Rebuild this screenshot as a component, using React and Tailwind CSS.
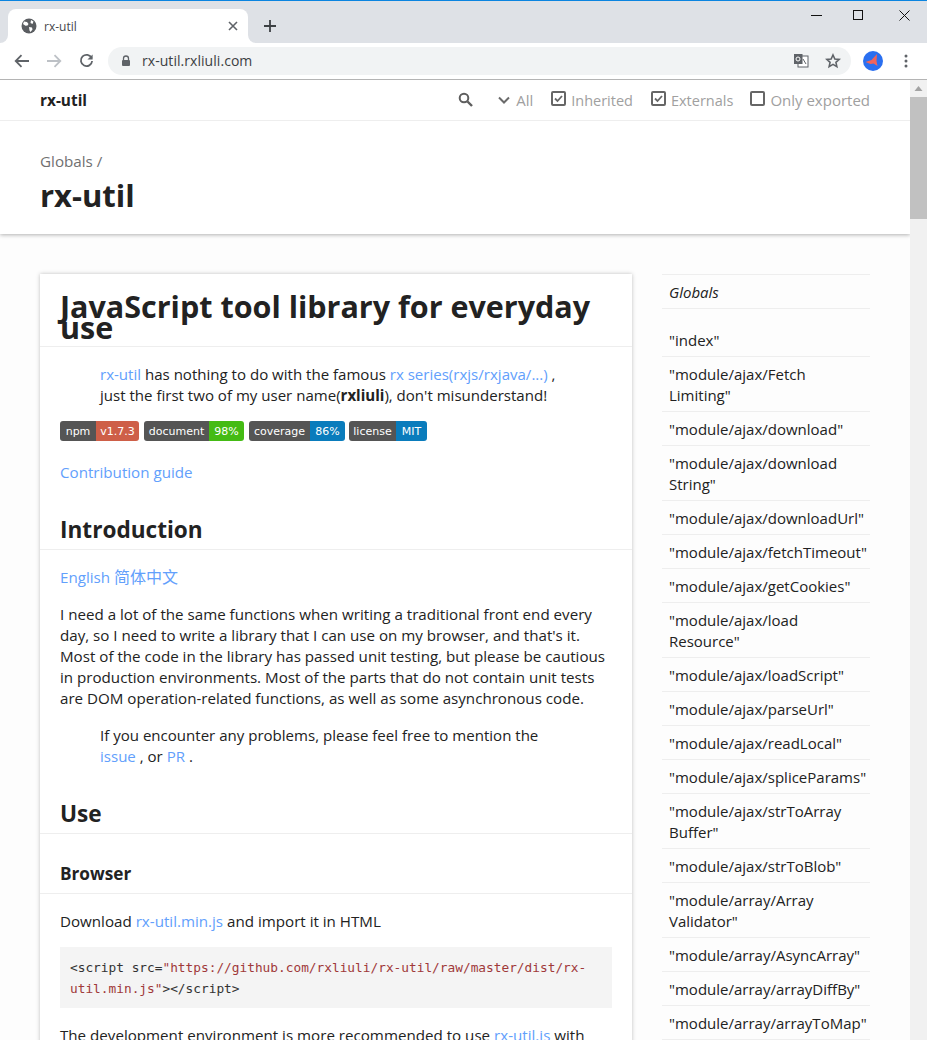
import React from 'react';

const sideItems = [
  ['"index"'],
  ['"module/ajax/Fetch', 'Limiting"'],
  ['"module/ajax/download"'],
  ['"module/ajax/download', 'String"'],
  ['"module/ajax/downloadUrl"'],
  ['"module/ajax/fetchTimeout"'],
  ['"module/ajax/getCookies"'],
  ['"module/ajax/load', 'Resource"'],
  ['"module/ajax/loadScript"'],
  ['"module/ajax/parseUrl"'],
  ['"module/ajax/readLocal"'],
  ['"module/ajax/spliceParams"'],
  ['"module/ajax/strToArray', 'Buffer"'],
  ['"module/ajax/strToBlob"'],
  ['"module/array/Array', 'Validator"'],
  ['"module/array/AsyncArray"'],
  ['"module/array/arrayDiffBy"'],
  ['"module/array/arrayToMap"'],
];

const badges = [
  { label: 'npm', value: 'v1.7.3', lw: 'w-[36px]', vw: 'w-[43px]', bg: 'bg-[#ce5f48]', extra: '' },
  { label: 'document', value: '98%', lw: 'w-[65px]', vw: 'w-[35px]', bg: 'bg-[#44bb14]', extra: '' },
  { label: 'coverage', value: '86%', lw: 'w-[61px]', vw: 'w-[35px]', bg: 'bg-[#0a7cbc]', extra: 'mr-[-1px]' },
  { label: 'license', value: 'MIT', lw: 'w-[47px]', vw: 'w-[31px]', bg: 'bg-[#0a7cbc]', extra: '' },
];

function Check({ checked }) {
  return (
    <svg width="15" height="15" viewBox="0 0 15 15" className="shrink-0 mb-[3px]">
      <rect x="1" y="1" width="13" height="13" rx="1" fill="none" stroke="#666666" strokeWidth="2" />
      {checked && <path d="M4 7.500l2.500 2.500 4.500-5" fill="none" stroke="#666666" strokeWidth="1.800" />}
    </svg>
  );
}

function Link({ children }) {
  return <a className="text-[#62a0fc]">{children}</a>;
}

function ChromeBar() {
  return (
    <div className="h-[80px] shrink-0 flex flex-col bg-[#dee1e6]">
      <div className="h-[1px] bg-[#0a84e0]" />
      <div className="h-[42px] flex relative">
        <div className="relative mt-[8px] ml-[8px] w-[240px] h-[34px] bg-white rounded-t-[8px] flex items-center pl-[13px] pr-[10px]">
          <div className="absolute left-[-8px] bottom-0 w-[8px] h-[8px] bg-white">
            <div className="w-full h-full bg-[#dee1e6] rounded-br-[8px]" />
          </div>
          <div className="absolute right-[-8px] bottom-0 w-[8px] h-[8px] bg-white">
            <div className="w-full h-full bg-[#dee1e6] rounded-bl-[8px]" />
          </div>
          <svg width="16" height="16" viewBox="0 0 16 16">
            <circle cx="8" cy="8" r="7.500" fill="#5a5d61" />
            <path d="M3 3.500l3 .5 1.500 2-1 1.500-2 .2L2 6zM10 2l2.500 1.500-1 2.500-2-1zM8 9l3 .5.5 2-2 2.500-1-1.500z" fill="#fff" />
          </svg>
          <span className="ml-[7px] text-[12px] text-[#45484c] font-['Open_Sans',sans-serif]">rx-util</span>
          <svg width="10" height="10" viewBox="0 0 10 10" className="ml-auto">
            <path d="M1 1l8 8M9 1l-8 8" stroke="#5f6368" strokeWidth="1.600" />
          </svg>
        </div>
        <svg width="12" height="12" viewBox="0 0 12 12" className="ml-[16px] mt-[19px]">
          <path d="M6 0v12M0 6h12" stroke="#3c4043" strokeWidth="1.800" />
        </svg>
        <div className="absolute right-0 top-0 flex">
          <svg width="11" height="11" viewBox="0 0 11 11" className="absolute left-[-116px] top-[9px]">
            <path d="M0 5.500h11" stroke="#111" strokeWidth="1" />
          </svg>
          <svg width="11" height="11" viewBox="0 0 11 11" className="absolute left-[-74px] top-[9px]">
            <rect x=".5" y=".5" width="9" height="9" fill="none" stroke="#111" />
          </svg>
          <svg width="11" height="11" viewBox="0 0 11 11" className="absolute left-[-28px] top-[9px]">
            <path d="M.5.5l10 10M10.500.5l-10 10" stroke="#111" strokeWidth="1" />
          </svg>
        </div>
      </div>
      <div className="h-[36px] bg-white flex items-center pl-[14px] pr-[14px]">
        <svg width="16" height="14" viewBox="0 0 16 14">
          <path d="M15 7H2M7.500 1.200L1.700 7l5.800 5.800" fill="none" stroke="#5f6368" strokeWidth="1.800" />
        </svg>
        <svg width="16" height="14" viewBox="0 0 16 14" className="ml-[16px]">
          <path d="M1 7h13M8.500 1.200L14.300 7l-5.800 5.800" fill="none" stroke="#bdc1c6" strokeWidth="1.800" />
        </svg>
        <svg width="15" height="16" viewBox="0 0 16 16" className="ml-[17px]">
          <path d="M13.500 5A6 6 0 1 0 14 8" fill="none" stroke="#5f6368" strokeWidth="1.900" />
          <path d="M14.500 1v5.500H9z" fill="#5f6368" />
        </svg>
        <div className="ml-[14px] w-[743px] h-[28px] bg-[#f1f3f4] rounded-full flex items-center pl-[13px] pr-[10px]">
          <svg width="10" height="12" viewBox="0 0 10 12">
            <path d="M2.500 5V3.500a2.500 2.500 0 0 1 5 0V5" fill="none" stroke="#5f6368" strokeWidth="1.300" />
            <rect x="1" y="5" width="8" height="6" rx="1" fill="#5f6368" />
          </svg>
          <span className="ml-[11px] mb-[1px] text-[14px] text-[#3c4043] font-['Open_Sans',sans-serif] tracking-[0.05px]">rx-util.rxliuli.com</span>
          <svg width="16" height="16" viewBox="0 0 16 16" className="ml-auto">
            <rect x="5" y="3" width="10" height="11" fill="#fff" stroke="#5f6368" />
            <path d="M10 6l3 5" stroke="#5f6368" />
            <rect x="1" y="1" width="8.500" height="10" fill="#5f6368" />
            <circle cx="5" cy="6" r="2" fill="none" stroke="#fff" />
          </svg>
          <svg width="16" height="16" viewBox="0 0 24 24" className="ml-[16px]">
            <path d="M12 3l2.800 6 6.400.7-4.800 4.300 1.400 6.400L12 17.100l-5.800 3.300 1.400-6.400L2.800 9.700 9.200 9z" fill="none" stroke="#5f6368" strokeWidth="2.400" />
          </svg>
        </div>
        <svg width="20" height="20" viewBox="0 0 20 20" className="ml-[12px]">
          <circle cx="10" cy="10" r="10" fill="#2a6ff0" />
          <path d="M2.500 11l6-2 5.500-6-.5 7 1 5-4-2.500-3 .5z" fill="#f2645a" />
        </svg>
        <svg width="4" height="14" viewBox="0 0 4 14" className="ml-[21px]">
          <circle cx="2" cy="2" r="1.500" fill="#5f6368" />
          <circle cx="2" cy="7" r="1.500" fill="#5f6368" />
          <circle cx="2" cy="12" r="1.500" fill="#5f6368" />
        </svg>
      </div>
      <div className="h-[1px] bg-[#b4b4b4]" />
    </div>
  );
}

function Toolbar() {
  return (
    <div className="h-[41px] shrink-0 border-b border-[#eeeeee] pl-[40px] pr-[40px] flex items-center">
      <span className="font-bold text-[#222222] text-[15.4px]">rx-util</span>
      <svg width="15" height="15" viewBox="0 0 15 15" className="ml-auto mb-[2px]">
        <circle cx="6" cy="6" r="4.300" fill="none" stroke="#5e5e5e" strokeWidth="2" />
        <path d="M9.500 9.500l4.500 4.500" stroke="#5e5e5e" strokeWidth="2.400" />
      </svg>
      <svg width="12" height="8" viewBox="0 0 12 8" className="ml-[25px]">
        <path d="M1 1.500l5 5 5-5" fill="none" stroke="#6a6a6a" strokeWidth="2" />
      </svg>
      <span className="ml-[6px] text-[#a0a0a0]">All</span>
      <div className="ml-[18px] flex items-center gap-[5px]">
        <Check checked />
        <span className="text-[#a0a0a0] text-[14.5px]">Inherited</span>
      </div>
      <div className="ml-[18px] flex items-center gap-[5px]">
        <Check checked />
        <span className="text-[#a0a0a0] text-[14.5px]">Externals</span>
      </div>
      <div className="ml-[17px] flex items-center gap-[5px]">
        <Check />
        <span className="text-[#a0a0a0]">Only exported</span>
      </div>
    </div>
  );
}

function Badge({ label, value, lw, vw, bg, extra }) {
  return (
    <span className={`flex h-[20px] rounded-[3px] overflow-hidden text-white text-[11px] leading-[21px] text-center font-['DejaVu_Sans',sans-serif] ${extra}`}>
      <span className={`${lw} bg-[#555555]`}>{label}</span>
      <span className={`${vw} ${bg}`}>{value}</span>
    </span>
  );
}

function Card() {
  return (
    <div className="w-[592px] shrink-0 h-[900px] bg-white shadow-[0_0_4px_rgba(0,0,0,0.25)] text-[#222222] text-[15.15px]">
      <h1 className="px-[20px] pt-[22px] pb-[8px] text-[30.5px] font-bold leading-[21px] border-b border-[#eeeeee] whitespace-nowrap">
        JavaScript tool library for everyday
        <br />
        use
      </h1>
      <div className="px-[20px] pt-[17px]">
        <div className="pl-[40px] text-[15.05px]">
          <Link>rx-util</Link> has nothing to do with the famous <Link>rx series(rxjs/rxjava/...)</Link> ,
          <br />
          just the first two of my user name(<b>rxliuli</b>), don't misunderstand!
        </div>
        <div className="flex gap-[5px] mt-[15px]">
          {badges.map((b) => (
            <Badge key={b.label} {...b} />
          ))}
        </div>
        <p className="mt-[21px]">
          <Link>Contribution guide</Link>
        </p>
      </div>
      <h2 className="mt-[36px] px-[20px] pb-[9px] text-[22.6px] font-bold leading-[21px] border-b border-[#eeeeee]">
        Introduction
      </h2>
      <div className="px-[20px] pt-[17px]">
        <p>
          <Link>
            English <span className="text-[16px]">简体中文</span>
          </Link>
        </p>
        <p className="mt-[16px]">
          I need a lot of the same functions when writing a traditional front end every
          <br />
          day, so I need to write a library that I can use on my browser, and that's it.
          <br />
          Most of the code in the library has passed unit testing, but please be cautious
          <br />
          in production environments. Most of the parts that do not contain unit tests
          <br />
          are DOM operation-related functions, as well as some asynchronous code.
        </p>
        <div className="mt-[16px] pl-[40px] text-[15.05px]">
          If you encounter any problems, please feel free to mention the
          <br />
          <Link>issue</Link> , or <Link>PR</Link> .
        </div>
      </div>
      <h2 className="mt-[36px] px-[20px] pb-[9px] text-[22.6px] font-bold leading-[21px] border-b border-[#eeeeee]">
        Use
      </h2>
      <h3 className="mt-[29px] px-[20px] pb-[9px] text-[17.2px] font-bold leading-[21px] border-b border-[#eeeeee]">
        Browser
      </h3>
      <div className="px-[20px] pt-[17px]">
        <p>
          Download <Link>rx-util.min.js</Link> and import it in HTML
        </p>
        <pre className="mt-[15px] h-[61px] bg-[#f4f4f4] px-[10px] py-[10px] text-[12.8px] leading-[21px] font-['DejaVu_Sans_Mono',monospace] text-[#333333]">
          {'<script src='}
          <span className="text-[#a0393a]">{'"https://github.com/rxliuli/rx-util/raw/master/dist/rx-'}</span>
          {'\n'}
          <span className="text-[#a0393a]">{'util.min.js"'}</span>
          {'></script>'}
        </pre>
        <p className="mt-[17px]">
          The development environment is more recommended to use <Link>rx-util.js</Link> with
        </p>
      </div>
    </div>
  );
}

function Sidebar() {
  return (
    <div className="ml-[30px] w-[208px] shrink-0 text-[#222222]">
      <div className="border-y border-[#eeeeee] px-[7px] pt-[7px] italic h-[35px]">Globals</div>
      <ul className="mt-[14px]">
        {sideItems.map((lines) => (
          <li key={lines[0]} className="border-b border-[#eeeeee] px-[7px] pt-[7px] pb-[5px] whitespace-nowrap">
            {lines.map((l) => (
              <div key={l}>{l}</div>
            ))}
          </li>
        ))}
      </ul>
    </div>
  );
}

function Scrollbar() {
  return (
    <div className="absolute right-0 top-0 bottom-0 w-[17px] bg-[#f1f1f1]">
      <svg width="17" height="17" viewBox="0 0 17 17">
        <path d="M8.500 6l4 5h-8z" fill="#a3a3a3" />
      </svg>
      <div className="h-[122px] bg-[#c1c1c1]" />
    </div>
  );
}

export default function App() {
  return (
    <div className="w-[927px] h-[1040px] overflow-hidden flex flex-col bg-[#fdfdfd] font-['Open_Sans','Noto_Sans_CJK_SC',sans-serif] text-[15px] leading-[21px]">
      <ChromeBar />
      <div className="relative flex-1 overflow-hidden pr-[17px]">
        <div className="bg-white shadow-[0_1px_4px_rgba(0,0,0,0.3)] h-[154px] relative">
          <Toolbar />
          <div className="px-[40px] pt-[30px]">
            <div className="text-[#707070] text-[15.2px]">Globals /</div>
            <h1 className="mt-[2px] text-[31px] font-bold leading-[42px] text-[#222222]">rx-util</h1>
          </div>
        </div>
        <div className="flex pl-[40px] pt-[40px]">
          <Card />
          <Sidebar />
        </div>
        <Scrollbar />
      </div>
    </div>
  );
}
